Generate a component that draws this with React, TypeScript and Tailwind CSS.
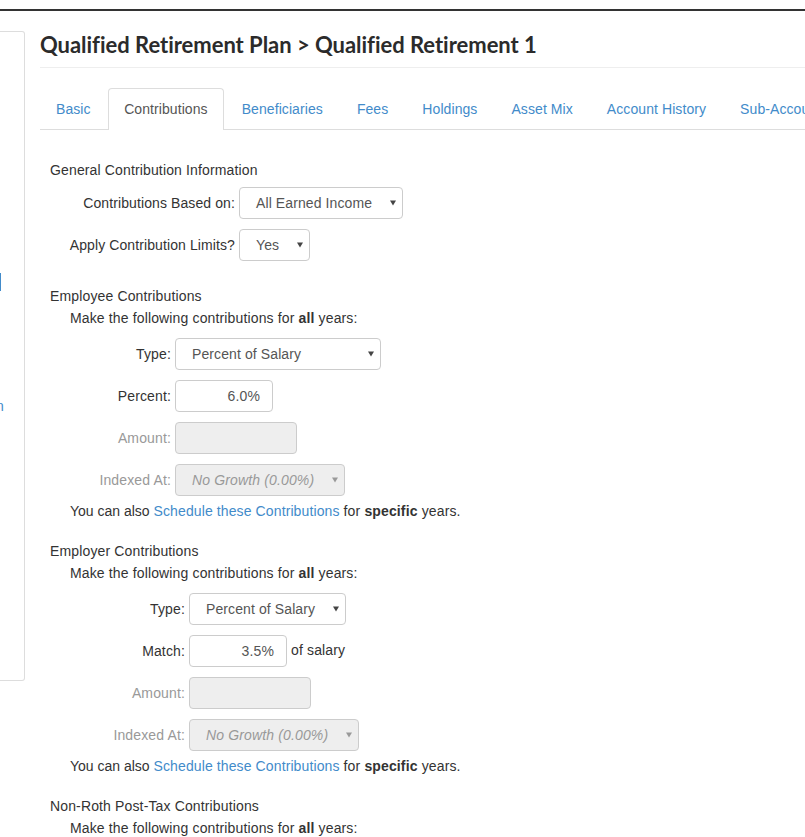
import React from "react";

function Caret({ light }: { light?: boolean }) {
  return (
    <svg width="6" height="6" viewBox="0 0 6 6" className="shrink-0 -mt-[1px]">
      <path d="M0 0.5H6L3 5.5Z" fill={light ? "#999999" : "#444444"} />
    </svg>
  );
}

function Select({ value, w, disabled }: { value: string; w: string; disabled?: boolean }) {
  return (
    <div
      className={
        disabled
          ? `${w} h-[32px] flex items-center justify-between pl-[16px] pr-[6px] border border-[#cccccc] rounded bg-[#eeeeee] text-[#999999] italic`
          : `${w} h-[32px] flex items-center justify-between pl-[16px] pr-[6px] border border-[#cccccc] rounded bg-white text-[#555555] tracking-[0.1px]`
      }
    >
      <span>{value}</span>
      <Caret light={disabled} />
    </div>
  );
}

function Row({
  label,
  labelW,
  disabled,
  children,
}: {
  label: string;
  labelW: string;
  disabled?: boolean;
  children: React.ReactNode;
}) {
  return (
    <div className="flex items-center gap-[4px] h-[32px]">
      <div className={`${labelW} shrink-0 text-right ${disabled ? "text-[#999999]" : "text-[#333333]"}`}>{label}</div>
      {children}
    </div>
  );
}

function TextBox({ value }: { value: string }) {
  return (
    <div className="w-[98px] h-[32px] flex items-center justify-end pr-[12px] border border-[#cccccc] rounded bg-white text-[#555555]">
      {value}
    </div>
  );
}

function DisabledBox() {
  return <div className="w-[122px] h-[32px] border border-[#cccccc] rounded bg-[#eeeeee]" />;
}

function ContributionBlock({
  title,
  labelW,
  typeW,
  valueLabel,
  value,
  suffix,
}: {
  title: string;
  labelW: string;
  typeW: string;
  valueLabel: string;
  value: string;
  suffix?: string;
}) {
  return (
    <section>
      <h3 className="h-[20px] leading-[20px]">{title}</h3>
      <p className="pl-[20px] mt-[2px] h-[20px] leading-[20px]">
        Make the following contributions for <b>all</b> years:
      </p>
      <div className="mt-[10px] flex flex-col gap-[10px]">
        <Row label="Type:" labelW={labelW}>
          <Select value="Percent of Salary" w={typeW} />
        </Row>
        <Row label={valueLabel} labelW={labelW}>
          <TextBox value={value} />
          {suffix ? <span className="-mt-[3px]">{suffix}</span> : null}
        </Row>
        <Row label="Amount:" labelW={labelW} disabled>
          <DisabledBox />
        </Row>
        <Row label="Indexed At:" labelW={labelW} disabled>
          <Select value="No Growth (0.00%)" w="w-[170px]" disabled />
        </Row>
      </div>
      <p className="pl-[20px] mt-[5px] h-[20px] leading-[20px]">
        <span className="tracking-normal">You can also </span>
        <a className="text-[#428bca] tracking-[0.11px]">Schedule these Contributions</a> for <b>specific</b> years.
      </p>
    </section>
  );
}

const tabs = ["Basic", "Contributions", "Beneficiaries", "Fees", "Holdings", "Asset Mix", "Account History", "Sub-Accounts"];

export default function App() {
  return (
    <div className="w-[805px] h-[837px] overflow-hidden bg-white text-[#333333] text-[14px] leading-[20px] tracking-[0.14px] font-['Liberation_Sans',Arial,sans-serif]">
      <div className="mt-[9px] h-[2px] bg-[#333333]" />
      <div className="flex">
        <aside className="relative w-[25px] h-[650px] mt-[20px] shrink-0 border border-l-0 border-[#dddddd] rounded-r-[3px]">
          <div className="absolute left-0 top-[241px] w-[1px] h-[18px] bg-[#428bca]" />
          <span className="absolute -left-[4px] top-[364px] text-[#428bca]">n</span>
        </aside>
        <main className="ml-[15px] w-[765px] shrink-0 overflow-hidden">
          <div className="h-[37px] mt-[19px]">
            <h1 className="text-[22px] leading-[30px] font-bold tracking-[-0.03px] text-[#2b2b2b] whitespace-nowrap font-['Lato',sans-serif]">
              Qualified Retirement Plan &gt; Qualified Retirement 1
            </h1>
          </div>
          <div className="h-[21px] border-t border-[#eeeeee]" />
          <nav className="flex h-[42px] border-b border-[#dddddd] whitespace-nowrap tracking-[0.08px]">
            {tabs.map((t, i) => (
              <div
                key={t}
                className={
                  i === 1
                    ? "mr-[2px] px-[15px] h-[42px] pt-[10px] border border-b-0 border-[#dddddd] rounded-t bg-white text-[#555555] shrink-0"
                    : i === 0
                      ? "mr-[1.5px] px-[16px] h-[42px] pt-[11px] text-[#428bca] shrink-0"
                      : "mr-[2px] px-[16px] h-[42px] pt-[11px] text-[#428bca] shrink-0"
                }
              >
                {t}
              </div>
            ))}
          </nav>
          <div className="pl-[10px] pt-[30px]">
            <section>
              <h3 className="h-[20px] leading-[20px]">General Contribution Information</h3>
              <div className="mt-[7px] flex flex-col gap-[10px] tracking-[0.1px]">
                <Row label="Contributions Based on:" labelW="w-[185px]">
                  <Select value="All Earned Income" w="w-[164px]" />
                </Row>
                <Row label="Apply Contribution Limits?" labelW="w-[185px]">
                  <Select value="Yes" w="w-[71px]" />
                </Row>
              </div>
            </section>
            <div className="mt-[25px]">
              <ContributionBlock
                title="Employee Contributions"
                labelW="w-[121px]"
                typeW="w-[206px]"
                valueLabel="Percent:"
                value="6.0%"
              />
            </div>
            <div className="mt-[20px]">
              <ContributionBlock
                title="Employer Contributions"
                labelW="w-[135px]"
                typeW="w-[157px]"
                valueLabel="Match:"
                value="3.5%"
                suffix="of salary"
              />
            </div>
            <section className="mt-[20px]">
              <h3 className="h-[20px] leading-[20px]">Non-Roth Post-Tax Contributions</h3>
              <p className="pl-[20px] mt-[2px] h-[20px] leading-[20px]">
                Make the following contributions for <b>all</b> years:
              </p>
            </section>
          </div>
        </main>
      </div>
    </div>
  );
}
